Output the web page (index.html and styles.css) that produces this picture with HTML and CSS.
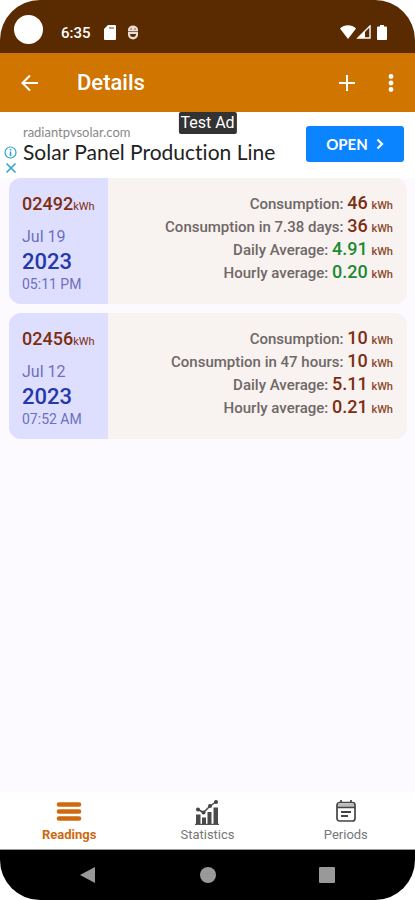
FILE: index.html
```html
<!DOCTYPE html>
<html lang="en">
<head>
  <meta charset="UTF-8">
  <meta name="viewport" content="width=device-width, initial-scale=1.0">
  <title>Details</title>
  <link rel="stylesheet" href="styles.css">
</head>
<body>
  <div class="phone">
    <div class="status">
      <span class="status__camera"></span>
      <span class="status__time">6:35</span>
      <svg class="status__card" width="12" height="15" viewBox="0 0 12 15"><path d="M4 0h7a1 1 0 0 1 1 1v13a1 1 0 0 1-1 1H1a1 1 0 0 1-1-1V4z" fill="#fff"/><path d="M5 3h5" stroke="#b9a08c" stroke-width="2"/></svg>
      <svg class="status__debug" width="12" height="15" viewBox="0 0 12 15"><path d="M1 4.500a5 4 0 0 1 10 0v5a5 5 0 0 1-10 0z" fill="#e9ddd3"/><path d="M3 4h2M7 4h2M1 6.500h10" stroke="#8a6a50"/><path d="M3 9h6a3 3 0 0 1-6 0z" fill="#5a2b00"/></svg>
      <div class="status__signals">
        <svg width="16" height="14" viewBox="0 0 16 14"><path d="M0 3.500C4.500-.8 11.500-.8 16 3.500L8 14z" fill="#fff"/></svg>
        <svg width="15" height="14" viewBox="0 0 15 14"><path d="M14 1v12H2z" fill="none" stroke="#fff" stroke-width="1.400"/><path d="M9 5.500V13H1.500z" fill="#fff"/></svg>
        <svg class="status__battery" width="10" height="15" viewBox="0 0 10 15"><path d="M3 0h4v1.500h2a1 1 0 0 1 1 1V14a1 1 0 0 1-1 1H1a1 1 0 0 1-1-1V2.500a1 1 0 0 1 1-1h2z" fill="#fff"/></svg>
      </div>
    </div>

    <header class="appbar">
      <button class="appbar__button" aria-label="Back">
        <svg width="18" height="18" viewBox="0 0 18 18"><path d="M17 9H2M9 1.500L1.500 9 9 16.500" fill="none" stroke="#fff" stroke-width="2"/></svg>
      </button>
      <h1 class="appbar__title">Details</h1>
      <button class="appbar__button" aria-label="Add">
        <svg width="16" height="16" viewBox="0 0 16 16"><path d="M8 0v16M0 8h16" stroke="#fff" stroke-width="2"/></svg>
      </button>
      <button class="appbar__button appbar__button--more" aria-label="More options">
        <svg width="6" height="18" viewBox="0 0 6 18"><circle cx="3" cy="2.500" r="2.400" fill="#fff"/><circle cx="3" cy="9" r="2.400" fill="#fff"/><circle cx="3" cy="15.500" r="2.400" fill="#fff"/></svg>
      </button>
    </header>

    <section class="ad">
      <span class="ad__badge">Test Ad</span>
      <div class="ad__marks">
        <svg width="13" height="13" viewBox="0 0 13 13"><circle cx="6.500" cy="6.500" r="5.500" fill="none" stroke="#2ba3c9" stroke-width="1.200"/><path d="M6.500 5.500V10M6.500 3v1.500" stroke="#2ba3c9" stroke-width="1.600"/></svg>
        <svg width="10" height="10" viewBox="0 0 10 10"><path d="M.5.5l9 9M9.500.5l-9 9" stroke="#2ba3c9" stroke-width="1.500"/></svg>
      </div>
      <div class="ad__text">
        <span class="ad__site">radiantpvsolar.com</span>
        <span class="ad__title">Solar Panel Production Line</span>
      </div>
      <a class="ad__open" href="#">OPEN
        <svg width="8" height="12" viewBox="0 0 8 12"><path d="M1.500 1.500L6 6l-4.500 4.500" fill="none" stroke="#fff" stroke-width="2.200"/></svg>
      </a>
    </section>

    <main class="readings">
      <article class="reading">
        <div class="reading__date">
          <span class="reading__meter">02492<small>kWh</small></span>
          <span class="reading__day">Jul 19</span>
          <span class="reading__year">2023</span>
          <span class="reading__time">05:11 PM</span>
        </div>
        <div class="reading__stats">
          <p>Consumption: <b>46</b> <small>kWh</small></p>
          <p>Consumption in 7.38 days: <b>36</b> <small>kWh</small></p>
          <p>Daily Average: <b class="good">4.91</b> <small>kWh</small></p>
          <p>Hourly average: <b class="good">0.20</b> <small>kWh</small></p>
        </div>
      </article>
      <article class="reading">
        <div class="reading__date">
          <span class="reading__meter">02456<small>kWh</small></span>
          <span class="reading__day">Jul 12</span>
          <span class="reading__year">2023</span>
          <span class="reading__time">07:52 AM</span>
        </div>
        <div class="reading__stats">
          <p>Consumption: <b>10</b> <small>kWh</small></p>
          <p>Consumption in 47 hours: <b>10</b> <small>kWh</small></p>
          <p>Daily Average: <b>5.11</b> <small>kWh</small></p>
          <p>Hourly average: <b>0.21</b> <small>kWh</small></p>
        </div>
      </article>
    </main>

    <nav class="tabs">
      <a class="tab tab--active" href="#">
        <svg width="26" height="26" viewBox="0 0 26 26"><path d="M3 5.500h20M3 12.500h20M3 19.500h20" stroke="#cd6a10" stroke-width="4.600" stroke-linecap="round"/></svg>
        Readings
      </a>
      <a class="tab" href="#">
        <svg width="26" height="26" viewBox="0 0 26 26"><path d="M1 25.300h24" stroke="#555" stroke-width="1.200"/><path d="M2 15.500h4.500V25H2zM8 18.500h4V25H8zM13.500 13h4v12h-4zM19.500 8.500H24V25h-4.500z" fill="#4a4a4a"/><path d="M4 10.500l5.500 3L16 7l6-4" fill="none" stroke="#4a4a4a" stroke-width="1.500"/><circle cx="4" cy="10.500" r="2" fill="#444"/><circle cx="9.500" cy="13.500" r="2" fill="#444"/><circle cx="16" cy="7" r="2" fill="#444"/><circle cx="22" cy="3" r="2" fill="#444"/></svg>
        Statistics
      </a>
      <a class="tab" href="#">
        <svg width="26" height="26" viewBox="0 0 26 26"><rect x="4" y="3.500" width="18" height="18.500" rx="2.500" fill="none" stroke="#444" stroke-width="1.700"/><path d="M5 4.500h16v4H5z" fill="#bbb"/><path d="M4 8.500h18M8 1v3M18 1v3" stroke="#444" stroke-width="1.700"/><path d="M8 13h10M8 17h7" stroke="#444" stroke-width="1.800"/></svg>
        Periods
      </a>
    </nav>

    <div class="sysnav">
      <button class="sysnav__button" aria-label="Back"><svg width="18" height="18" viewBox="0 0 18 18"><path d="M1 9L16 1v16z" fill="#999"/></svg></button>
      <button class="sysnav__button" aria-label="Home"><svg width="18" height="18" viewBox="0 0 18 18"><circle cx="9" cy="9" r="8" fill="#999"/></svg></button>
      <button class="sysnav__button" aria-label="Recent apps"><svg width="18" height="18" viewBox="0 0 18 18"><rect x="1" y="1" width="16" height="16" rx="1" fill="#999"/></svg></button>
    </div>
  </div>
</body>
</html>
```
FILE: styles.css
```css
:root {
  --brown: #5a2b00;
  --orange: #d07500;
  --rust: #7d2e10;
  --green: #1d8a32;
  --indigo: #2539a8;
}

* {
  box-sizing: border-box;
}

body {
  margin: 0;
  background: #fff;
  font-family: Roboto, "Liberation Sans", sans-serif;
}

button {
  border: 0;
  padding: 0;
  background: none;
}

a {
  text-decoration: none;
}

svg {
  display: block;
  flex-shrink: 0;
}

.phone {
  display: flex;
  flex-direction: column;
  min-height: 100vh;
  border-radius: 40px;
  overflow: hidden;
  background: #fdfaff;
}

.status {
  display: flex;
  align-items: center;
  height: 53px;
  padding: 5px 28px 0 14px;
  background: var(--brown);
  color: #fff;
}

.status__camera {
  width: 29px;
  height: 29px;
  border-radius: 50%;
  background: #fff;
}

.status__time {
  margin: 8px 13px 0 18px;
  font-size: 15px;
  font-weight: 500;
  line-height: 16px;
}

.status__card,
.status__debug,
.status__signals {
  margin-top: 6px;
}

.status__debug {
  margin-left: 11px;
}

.status__signals {
  display: flex;
  align-items: center;
  margin-left: auto;
}

.status__battery {
  margin-left: 6px;
}

.appbar {
  display: flex;
  align-items: center;
  height: 59px;
  padding: 0 12px 0 8px;
  background: var(--orange);
}

.appbar__button {
  display: flex;
  align-items: center;
  justify-content: center;
  width: 44px;
  height: 44px;
}

.appbar__button--more {
  width: 24px;
  margin-left: 10px;
}

.appbar__title {
  flex: 1;
  margin: 0 0 0 25px;
  color: #fff;
  font-size: 22px;
  font-weight: 500;
}

.ad {
  position: relative;
  display: flex;
  align-items: center;
  gap: 6px;
  height: 66px;
  padding: 0 11px 2px 4px;
  background: #fff;
}

.ad__badge {
  position: absolute;
  top: 0;
  left: 50%;
  transform: translateX(-50%);
  padding: 1px 2px;
  border-radius: 2px;
  background: #333;
  color: #fff;
  font-size: 16px;
  line-height: 20px;
}

.ad__marks {
  display: flex;
  flex-direction: column;
  align-items: center;
  gap: 4px;
  padding-top: 30px;
}

.ad__text {
  display: flex;
  flex: 1;
  flex-direction: column;
  font-family: Lato, sans-serif;
  font-variant-ligatures: none;
  white-space: nowrap;
}

.ad__site {
  color: #888;
  font-size: 13px;
  line-height: 16px;
}

.ad__title {
  color: #222;
  font-size: 21px;
  line-height: 24px;
}

.ad__open {
  display: flex;
  align-items: center;
  justify-content: center;
  gap: 8px;
  width: 98px;
  height: 36px;
  border-radius: 3px;
  background: #0b84ff;
  color: #fff;
  font-family: Lato, sans-serif;
  font-size: 15px;
  font-weight: 700;
}

.readings {
  display: flex;
  flex: 1;
  flex-direction: column;
  gap: 9px;
  padding: 0 8px 0 9px;
}

.reading {
  display: flex;
  border-radius: 12px;
  overflow: hidden;
  background: #f8f2f1;
}

.reading__date {
  display: flex;
  flex-direction: column;
  width: 99px;
  padding: 15px 0 12px 13px;
  background: #dedfff;
  white-space: nowrap;
}

.reading__meter {
  margin-bottom: 12px;
  color: var(--rust);
  font-size: 18px;
  font-weight: 500;
  line-height: 22px;
}

.reading__meter small {
  font-size: 11px;
  font-weight: 400;
  line-height: 12px;
}

.reading__day {
  color: #6d70bd;
  font-size: 16px;
  line-height: 20px;
}

.reading__year {
  color: var(--indigo);
  font-size: 22px;
  font-weight: 500;
  line-height: 29px;
}

.reading__time {
  color: #6d70bd;
  font-size: 14px;
  line-height: 16px;
}

.reading__stats {
  flex: 1;
  padding: 15px 14px 0 0;
  color: #6f6866;
  font-size: 15px;
  font-weight: 500;
  text-align: right;
}

.reading__stats p {
  margin: 0;
  line-height: 23px;
}

.reading__stats b {
  color: var(--rust);
  font-size: 18px;
  font-weight: 500;
  line-height: 18px;
}

.reading__stats b.good {
  color: var(--green);
}

.reading__stats small {
  color: #8a4a2c;
  font-size: 11px;
  line-height: 12px;
}

.tabs {
  display: flex;
  height: 58px;
  border-bottom: 1px solid #999;
  background: #fff;
}

.tab {
  display: flex;
  flex: 1;
  flex-direction: column;
  align-items: center;
  gap: 1px;
  padding-top: 7px;
  color: #777;
  font-size: 13px;
  line-height: 18px;
}

.tab--active {
  color: #cd6a10;
  font-weight: 700;
}

.sysnav {
  display: flex;
  align-items: center;
  justify-content: space-between;
  height: 50px;
  padding: 0 79px;
  background: #000;
}

.sysnav__button {
  display: flex;
}
```
